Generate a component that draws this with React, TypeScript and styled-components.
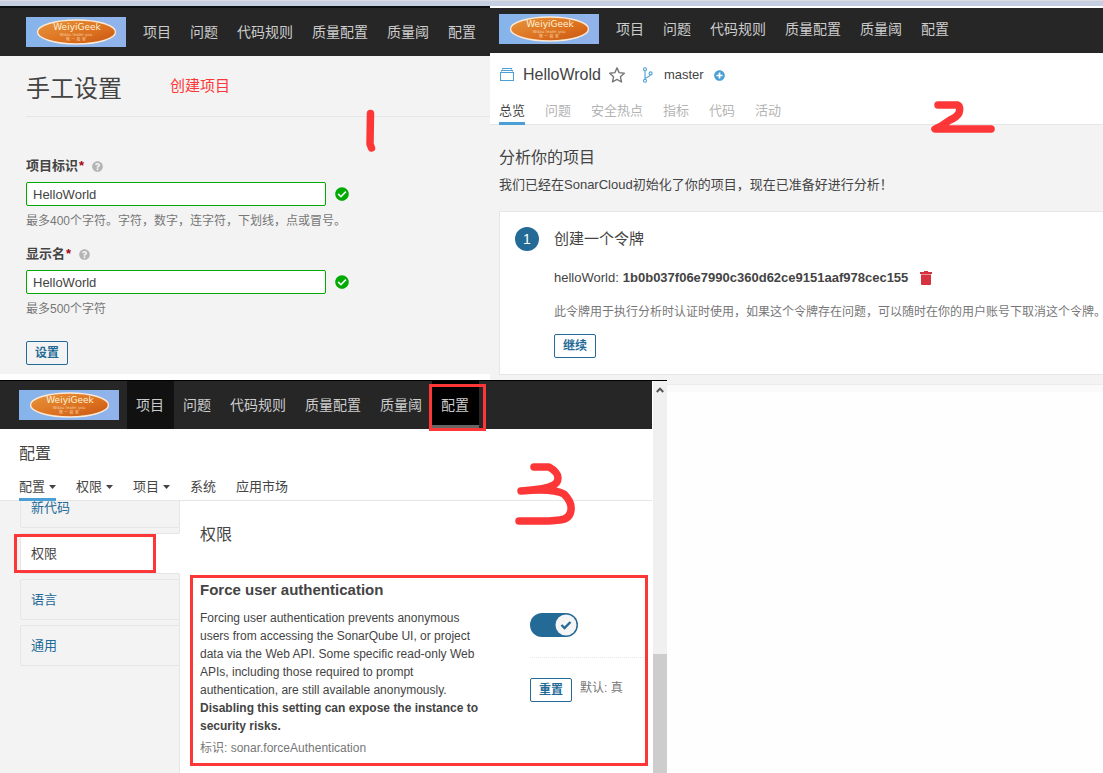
import React from 'react';
import styled, { createGlobalStyle, css } from 'styled-components';
import { FaCheckCircle, FaPlusCircle, FaQuestionCircle } from 'react-icons/fa';

const RED = '#fd3737';
const BLUE = '#236a97';
const LIGHT_BLUE = '#4b9fd5';
const LINE = '#e6e6e6';
const GREY_BG = '#f3f3f3';
const TEXT = '#444';
const MUTED = '#777';

const GlobalStyle = createGlobalStyle`
  * { box-sizing: border-box; }
  body {
    margin: 0;
    background: #fefefe;
    color: ${TEXT};
    font: 13px/18px "Liberation Sans", "Noto Sans CJK SC", sans-serif;
  }
  h1, h2, h3, p, ul { margin: 0; padding: 0; font-weight: 400; }
  ul { list-style: none; }
  a { text-decoration: none; color: inherit; }
  svg { display: block; flex: none; }
`;

/* ---------- page frame ---------- */

const Board = styled.div`
  display: flex;
  flex-direction: column;
  min-height: 100vh;
`;

const WindowEdge = styled.div`
  height: 6px;
  background: #c6cfe2;
  border-top: 1px solid #dadce0;
`;

const UpperRow = styled.div`
  display: grid;
  grid-template-columns: minmax(0, 490fr) minmax(0, 613fr);
`;

const LowerRow = styled.div`
  flex: 1;
  display: grid;
  grid-template-columns: minmax(0, 667fr) minmax(0, 436fr);
`;

const Remainder = styled.div`
  &::before {
    content: '';
    display: block;
    height: 8px;
    border-top: 4px solid ${GREY_BG};
    background: #fafafa;
    box-shadow: inset 0 1px #ececec;
  }
`;

/* ---------- top navigation ---------- */

const Bar = styled.nav<{ $inset: number; $compact?: boolean }>`
  display: flex;
  align-items: center;
  height: ${p => (p.$compact ? 45 : 48)}px;
  padding: 0 0 ${p => (p.$compact ? 3 : 0)}px ${p => p.$inset}px;
  background: #262626;
`;

const LogoLink = styled.a`
  margin-right: 8px;
`;

const BarList = styled.ul`
  display: flex;
  align-self: stretch;
`;

const BarItem = styled.li<{ $state?: 'hover' | 'current' }>`
  position: relative;
  display: flex;
  align-items: center;
  padding: 0 10px 0 9px;
  color: #ccc;
  font-size: 14px;
  line-height: 20px;
  white-space: nowrap;
  ${p => p.$state === 'hover' && css`background: #111;`}
  ${p => p.$state === 'current' && css`
    background: #000;
    box-shadow: inset 0 -4px #666;
  `}
`;

const Highlight = styled.span`
  position: absolute;
  z-index: 1;
  border: 3px solid ${RED};
  pointer-events: none;
`;

const BarHighlight = styled(Highlight)`
  inset: 3px -7px -2px -3px;
`;

function Logo() {
  return (
    <svg width="100" height="30" viewBox="0 0 100 30" role="img" aria-label="WeiyiGeek">
      <defs>
        <linearGradient id="sky" x1="0" x2="1">
          <stop offset="0" stopColor="#86b4ea" />
          <stop offset="1" stopColor="#90b3ea" />
        </linearGradient>
        <linearGradient id="orange" x1="0" y1="0" x2="1" y2="1">
          <stop offset="0" stopColor="#e8963c" />
          <stop offset="0.6" stopColor="#dc701f" />
          <stop offset="1" stopColor="#c65412" />
        </linearGradient>
      </defs>
      <rect width="100" height="30" fill="url(#sky)" />
      <ellipse cx="50.5" cy="15" rx="39" ry="12" fill="url(#orange)" stroke="#fbe9d6" strokeWidth="1.4" />
      <g textAnchor="middle" fontFamily="DejaVu Sans, Noto Sans CJK SC, sans-serif">
        <text x="51" y="13" fontSize="9" fill="#fff3d8">WeiyiGeek</text>
        <text x="50" y="19" fontSize="4" fill="#f4cda0">Wdau tealei you</text>
        <text x="50" y="24" fontSize="4" fill="#f4cda0">唯 一 极 客</text>
      </g>
    </svg>
  );
}

const NAV = ['项目', '问题', '代码规则', '质量配置', '质量阈', '配置'];

function TopBar({ inset, compact, hover, current }: {
  inset: number; compact?: boolean; hover?: string; current?: string;
}) {
  return (
    <Bar $inset={inset} $compact={compact}>
      <LogoLink href="#"><Logo /></LogoLink>
      <BarList>
        {NAV.map(name => (
          <BarItem key={name} $state={name === hover ? 'hover' : name === current ? 'current' : undefined}>
            <a href="#">{name}</a>
            {name === current && <BarHighlight />}
          </BarItem>
        ))}
      </BarList>
    </Bar>
  );
}

/* ---------- shared parts ---------- */

const Button = styled.button`
  height: 24px;
  padding: 0 8px;
  border: 1px solid ${BLUE};
  border-radius: 2px;
  background: transparent;
  color: ${BLUE};
  font: bold 12px/20px "Liberation Sans", "Noto Sans CJK SC", sans-serif;
  min-width: 42px;
`;

const Mark = styled.svg<{ $left: string; $top: number }>`
  position: absolute;
  left: ${p => p.$left};
  top: ${p => p.$top}px;
  fill: none;
  stroke: ${RED};
  stroke-width: 7.5;
  stroke-linecap: round;
  stroke-linejoin: round;
  pointer-events: none;
`;

const Heading = styled.h2`
  font-size: 16px;
  line-height: 24px;
`;

const Tabs = styled.ul`
  display: flex;
  gap: 20px;
`;

const Tab = styled.li<{ $active?: boolean; $faded?: boolean }>`
  height: 26px;
  margin-bottom: -1px;
  border-bottom: 3px solid ${p => (p.$active ? LIGHT_BLUE : 'transparent')};
  color: ${p => (p.$faded ? '#b4b4b4' : TEXT)};
  white-space: nowrap;
  a { display: flex; align-items: center; gap: 4px; line-height: 24px; }
`;

/* ---------- panel 1: create a project ---------- */

const CreatePanel = styled.section`
  padding-bottom: 6px;
  background: #fff;
`;

const CreateInner = styled.div`
  position: relative;
  height: 100%;
  border-top: 2px solid #0c1010;
  background: ${GREY_BG};
`;

const CreateBody = styled.div`
  padding: 0 0 9px 26px;
`;

const CreateHeader = styled.header`
  display: flex;
  align-items: center;
  gap: 48px;
  height: 61px;
  padding-top: 6px;
  border-bottom: 1px solid ${LINE};
`;

const PageTitle = styled.h1`
  font-size: 24px;
  line-height: 32px;
`;

const Caption = styled.p`
  padding-bottom: 6px;
  color: ${RED};
  font-size: 15px;
  line-height: 20px;
`;

const Form = styled.form`
  padding-top: 40px;
`;

const Field = styled.div`
  margin-bottom: 16px;
  &:last-of-type { margin-bottom: 24px; }
`;

const FieldLabel = styled.label`
  display: flex;
  align-items: center;
  margin-bottom: 7px;
  font-weight: bold;
  em { color: #a4030f; font-style: normal; margin: 0 8px 0 1px; }
  svg { color: #b4b4b4; }
`;

const FieldRow = styled.div`
  display: flex;
  align-items: center;
  gap: 9px;
  svg { color: #0a0; }
`;

const TextInput = styled.input`
  width: 300px;
  height: 24px;
  padding: 0 6px;
  border: 1px solid #0a0;
  border-radius: 2px;
  background: #fff;
  color: ${TEXT};
  font: 13px "Liberation Sans", sans-serif;
`;

const Hint = styled.p`
  margin-top: 7px;
  color: ${MUTED};
  font-size: 12px;
  line-height: 16px;
  white-space: nowrap;
`;

function TextField({ id, label, hint }: { id: string; label: string; hint: string }) {
  return (
    <Field>
      <FieldLabel htmlFor={id}>
        {label}<em>*</em><FaQuestionCircle size={11} />
      </FieldLabel>
      <FieldRow>
        <TextInput id={id} defaultValue="HelloWorld" />
        <FaCheckCircle size={14} />
      </FieldRow>
      <Hint>{hint}</Hint>
    </Field>
  );
}

function CreateProject() {
  return (
    <CreatePanel>
      <CreateInner>
        <TopBar inset={26} />
        <CreateBody>
          <CreateHeader>
            <PageTitle>手工设置</PageTitle>
            <Caption>创建项目</Caption>
          </CreateHeader>
          <Form onSubmit={e => e.preventDefault()}>
            <TextField id="key" label="项目标识" hint="最多400个字符。字符，数字，连字符，下划线，点或冒号。" />
            <TextField id="name" label="显示名" hint="最多500个字符" />
            <Button type="submit">设置</Button>
          </Form>
        </CreateBody>
        <Mark $left="74%" $top={98} width="16" height="50" viewBox="0 0 16 50">
          <path d="M7.5 7.5 L7 38 L8.5 42" />
        </Mark>
      </CreateInner>
    </CreatePanel>
  );
}

/* ---------- panel 2: project overview ---------- */

const ProjectPanel = styled.section`
  position: relative;
  display: flex;
  flex-direction: column;
  border-top: 2px solid #fff;
  background: ${GREY_BG};
`;

const ProjectHeader = styled.header`
  padding: 10px 0 0 9px;
  border-bottom: 1px solid ${LINE};
  background: #fff;
`;

const ProjectLine = styled.div`
  display: flex;
  align-items: center;
  height: 24px;
  margin-bottom: 12px;
  h1 { margin: 0 8px; font-size: 16px; line-height: 24px; }
`;

const Branch = styled.span`
  display: flex;
  align-items: center;
  gap: 10px;
  margin-left: 17px;
  > svg:last-child { color: ${LIGHT_BLUE}; }
`;

const ProjectBody = styled.div`
  flex: 1;
  padding: 21px 0 5px 9px;
`;

const Intro = styled.p`
  margin: 6px 0 17px;
  white-space: nowrap;
`;

const Card = styled.article`
  display: flex;
  gap: 15px;
  padding: 15px 0 16px 15px;
  border: 1px solid ${LINE};
  border-right: 0;
  background: #fff;
`;

const CardContent = styled.div`
  flex: 1;
  min-width: 0;
`;

const StepBadge = styled.span`
  flex: none;
  width: 24px;
  height: 24px;
  border-radius: 50%;
  background: ${BLUE};
  color: #fff;
  font-size: 14px;
  line-height: 24px;
  text-align: center;
`;

const CardTitle = styled.h3`
  font-size: 15px;
  line-height: 24px;
`;

const TokenLine = styled.p`
  display: flex;
  align-items: center;
  gap: 4px;
  margin-top: 18px;
`;

const IconButton = styled.button`
  margin-left: 8px;
  padding: 0;
  border: 0;
  background: none;
`;

const Note = styled.p`
  margin: 16px 0 14px;
  color: ${MUTED};
  font-size: 12px;
  line-height: 16px;
  white-space: nowrap;
`;

/* The closing stop takes half an em, so that the sentence ends flush. */
const EndStop = styled.span`
  font-family: "Noto Sans CJK SC", sans-serif;
  font-feature-settings: "halt" 1;
`;

function ProjectIcon() {
  return (
    <svg width="16" height="16" viewBox="0 0 16 16" fill={LIGHT_BLUE}>
      <path d="M14.985 13.988L1 14.005 1.02 5h13.966v8.988zM1.998 5.995l.006 7.02L14.022 13 14 6.004l-12.002-.01zM3 4.5V4h9.996l.004.5h1l-.005-1.497-11.98.003L2 4.5h1zm1-2v-.504h8.002L12 2.5h.997l-.003-1.5H3.004L3 2.5h1z" />
    </svg>
  );
}

function StarIcon() {
  return (
    <svg width="16" height="16" viewBox="0 0 16 16" fill="none" stroke="#777" strokeWidth="1.4" strokeLinejoin="round">
      <path d="M8 .9l2.1 4.7 5.2.6-3.9 3.5 1.1 5.3L8 12.4 3.5 15l1.1-5.3L.7 6.2l5.2-.6z" />
    </svg>
  );
}

function BranchIcon() {
  return (
    <svg width="12" height="16" viewBox="0 0 12 16" fill="none" stroke={LIGHT_BLUE} strokeWidth="1.1">
      <circle cx="3" cy="2.2" r="1.5" />
      <circle cx="3" cy="13.8" r="1.5" />
      <circle cx="8.6" cy="6.4" r="1.5" />
      <path d="M3 3.7v8.6M8.2 7.9C7.4 9.8 5.6 10.2 3 11.4" />
    </svg>
  );
}

function TrashIcon() {
  return (
    <svg width="12" height="14" viewBox="0 0 12 14" fill="#d4333f">
      <path d="M0 1h4V0h4v1h4v2H0z" />
      <path d="M1 3h10v1H1z" fill="#e9949b" />
      <path d="M1 4h10v9q0 1-1 1H2q-1 0-1-1z" />
    </svg>
  );
}

function ProjectOverview() {
  return (
    <ProjectPanel>
      <TopBar inset={9} compact />
      <ProjectHeader>
        <ProjectLine>
          <ProjectIcon />
          <h1>HelloWrold</h1>
          <StarIcon />
          <Branch><BranchIcon />master<FaPlusCircle size={11} /></Branch>
        </ProjectLine>
        <Tabs>
          <Tab $active><a href="#">总览</a></Tab>
          {['问题', '安全热点', '指标', '代码', '活动'].map(t => (
            <Tab key={t} $faded><a href="#">{t}</a></Tab>
          ))}
        </Tabs>
      </ProjectHeader>
      <ProjectBody>
        <Heading>分析你的项目</Heading>
        <Intro>我们已经在SonarCloud初始化了你的项目，现在已准备好进行分析！</Intro>
        <Card>
          <StepBadge>1</StepBadge>
          <CardContent>
            <CardTitle>创建一个令牌</CardTitle>
            <TokenLine>
              helloWorld: <strong>1b0b037f06e7990c360d62ce9151aaf978cec155</strong>
              <IconButton type="button" aria-label="删除"><TrashIcon /></IconButton>
            </TokenLine>
            <Note>
              此令牌用于执行分析时认证时使用，如果这个令牌存在问题，可以随时在你的用户账号下取消这个令牌<EndStop>。</EndStop>
            </Note>
            <Button type="button">继续</Button>
          </CardContent>
        </Card>
      </ProjectBody>
      <Mark $left="72%" $top={92} width="66" height="36" viewBox="0 0 66 36">
        <path d="M7 5 H26 Q30 6 28 13 Q26 17 19 20 L10 26 L4 29 H60" />
      </Mark>
    </ProjectPanel>
  );
}

/* ---------- panel 3: administration ---------- */

const AdminPanel = styled.section`
  display: flex;
  border-top: 1px solid #000;
  background: #fff;
`;

const AdminMain = styled.div`
  position: relative;
  flex: 1;
  min-width: 0;
  display: flex;
  flex-direction: column;
`;

const Scrollbar = styled.div`
  display: flex;
  flex-direction: column;
  justify-content: space-between;
  align-items: center;
  width: 14px;
  margin-left: 1px;
  padding-top: 6px;
  background: #f0f0f0;
  &::after {
    content: '';
    width: 100%;
    height: 31%;
    background: #cdcdcd;
  }
`;

const AdminHeader = styled.header`
  padding: 13px 0 0 19px;
  border-bottom: 1px solid ${LINE};
  h2 { margin-bottom: 9px; }
`;

const AdminBody = styled.div`
  flex: 1;
  display: flex;
`;

const Side = styled.aside`
  width: 180px;
  flex: none;
  overflow: hidden;
  padding-left: 20px;
  background: ${GREY_BG};
  box-shadow: inset -1px 0 ${LINE};
  ul { display: grid; gap: 5px; margin-top: -14px; }
`;

const SideItem = styled.li<{ $active?: boolean }>`
  position: relative;
  display: flex;
  align-items: center;
  height: 41px;
  padding-left: 10px;
  border: 1px solid ${LINE};
  border-right-color: ${p => (p.$active ? '#fff' : LINE)};
  border-radius: 2px 0 0 2px;
  background: ${p => (p.$active ? '#fff' : GREY_BG)};
  color: ${p => (p.$active ? TEXT : BLUE)};
`;

const SideHighlight = styled(Highlight)`
  inset: 0 23px 0 -7px;
`;

const Settings = styled.div`
  flex: 1;
  padding: 22px 4px 8px 10px;
  > h2 { margin: 0 0 28px 10px; }
`;

const SettingBox = styled.div`
  display: flex;
  gap: 50px;
  padding: 2px 0 6px 7px;
  border: 3px solid ${RED};
`;

const SettingText = styled.div`
  width: 280px;
  flex: none;
  font-size: 12px;
  h3 { margin-bottom: 9px; font-size: 15px; font-weight: bold; line-height: 20px; }
`;

const SettingKey = styled.p`
  margin-top: 4px;
  color: ${MUTED};
`;

const SettingControl = styled.div`
  flex: 1;
  padding-top: 33px;
`;

const Divider = styled.div`
  margin: 20px 0;
  border-top: 1px dotted ${LINE};
`;

const ResetRow = styled.div`
  display: flex;
  gap: 8px;
  color: ${MUTED};
  font-size: 12px;
  line-height: 20px;
`;

const Switch = styled.label`
  position: relative;
  display: block;
  width: 48px;
  height: 24px;
  input {
    appearance: none;
    width: 48px;
    height: 24px;
    margin: 0;
    border-radius: 12px;
    background: ${BLUE};
  }
  svg { position: absolute; top: 1px; right: 1px; }
`;

function Caret() {
  return (
    <svg width="7" height="4" viewBox="0 0 7 4" fill={TEXT}><path d="M0 0h7L3.5 4z" /></svg>
  );
}

function Administration() {
  return (
    <AdminPanel>
      <AdminMain>
        <TopBar inset={19} hover="项目" current="配置" />
        <AdminHeader>
          <Heading>配置</Heading>
          <Tabs>
            <Tab $active><a href="#">配置<Caret /></a></Tab>
            <Tab><a href="#">权限<Caret /></a></Tab>
            <Tab><a href="#">项目<Caret /></a></Tab>
            <Tab><a href="#">系统</a></Tab>
            <Tab><a href="#">应用市场</a></Tab>
          </Tabs>
        </AdminHeader>
        <AdminBody>
          <Side>
            <ul>
              <SideItem><a href="#">新代码</a></SideItem>
              <SideItem $active><a href="#">权限</a><SideHighlight /></SideItem>
              <SideItem><a href="#">语言</a></SideItem>
              <SideItem><a href="#">通用</a></SideItem>
            </ul>
          </Side>
          <Settings>
            <Heading>权限</Heading>
            <SettingBox>
              <SettingText>
                <h3>Force user authentication</h3>
                <p>
                  Forcing user authentication prevents anonymous users from accessing the SonarQube UI, or
                  project data via the Web API. Some specific read-only Web APIs, including those required
                  to prompt authentication, are still available anonymously.{' '}
                  <strong>Disabling this setting can expose the instance to security risks.</strong>
                </p>
                <SettingKey>标识: sonar.forceAuthentication</SettingKey>
              </SettingText>
              <SettingControl>
                <Switch>
                  <input type="checkbox" role="switch" defaultChecked aria-label="Force user authentication" />
                  <svg width="22" height="22" viewBox="0 0 22 22">
                    <circle cx="11" cy="11" r="10.5" fill="#f5f5f5" />
                    <path d="M6.5 11l3 3 6-6" fill="none" stroke={BLUE} strokeWidth="2.4" />
                  </svg>
                </Switch>
                <Divider />
                <ResetRow><Button type="button">重置</Button>默认: 真</ResetRow>
              </SettingControl>
            </SettingBox>
          </Settings>
        </AdminBody>
        <Mark $left="79%" $top={79} width="64" height="70" viewBox="0 0 64 70">
          <path d="M19 7 H34 Q43 12 43 18 Q43 24 36 26 Q30 29 6 31 Q38 28 49 34 Q57 42 56 50 Q55 59 45 60 L34 61 H4" />
        </Mark>
      </AdminMain>
      <Scrollbar>
        <svg width="8" height="6" viewBox="0 0 8 6" fill="none" stroke="#555" strokeWidth="2">
          <path d="M.8 5L4 1.6 7.2 5" />
        </svg>
      </Scrollbar>
    </AdminPanel>
  );
}

export default function App() {
  return (
    <Board lang="zh-CN">
      <GlobalStyle />
      <WindowEdge />
      <UpperRow>
        <CreateProject />
        <ProjectOverview />
      </UpperRow>
      <LowerRow>
        <Administration />
        <Remainder />
      </LowerRow>
    </Board>
  );
}
